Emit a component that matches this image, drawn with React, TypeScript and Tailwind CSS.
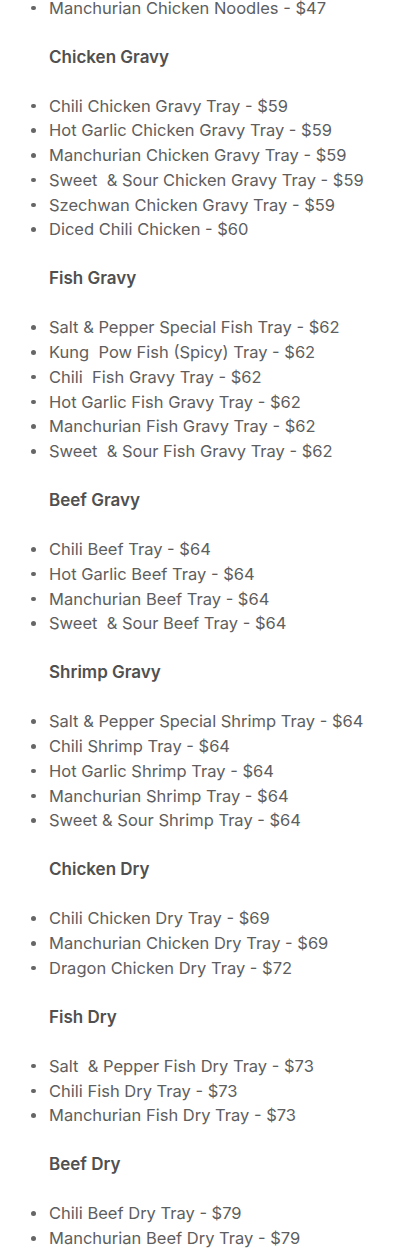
import React from "react";

const sections: { title: string; items: string[] }[] = [
  {
    title: "Chicken Gravy",
    items: [
      "Chili Chicken Gravy Tray - $59",
      "Hot Garlic Chicken Gravy Tray - $59",
      "Manchurian Chicken Gravy Tray - $59",
      "Sweet  & Sour Chicken Gravy Tray - $59",
      "Szechwan Chicken Gravy Tray - $59",
      "Diced Chili Chicken - $60",
    ],
  },
  {
    title: "Fish Gravy",
    items: [
      "Salt & Pepper Special Fish Tray - $62",
      "Kung  Pow Fish (Spicy) Tray - $62",
      "Chili  Fish Gravy Tray - $62",
      "Hot Garlic Fish Gravy Tray - $62",
      "Manchurian Fish Gravy Tray - $62",
      "Sweet  & Sour Fish Gravy Tray - $62",
    ],
  },
  {
    title: "Beef Gravy",
    items: [
      "Chili Beef Tray - $64",
      "Hot Garlic Beef Tray - $64",
      "Manchurian Beef Tray - $64",
      "Sweet  & Sour Beef Tray - $64",
    ],
  },
  {
    title: "Shrimp Gravy",
    items: [
      "Salt & Pepper Special Shrimp Tray - $64",
      "Chili Shrimp Tray - $64",
      "Hot Garlic Shrimp Tray - $64",
      "Manchurian Shrimp Tray - $64",
      "Sweet & Sour Shrimp Tray - $64",
    ],
  },
  {
    title: "Chicken Dry",
    items: [
      "Chili Chicken Dry Tray - $69",
      "Manchurian Chicken Dry Tray - $69",
      "Dragon Chicken Dry Tray - $72",
    ],
  },
  {
    title: "Fish Dry",
    items: [
      "Salt  & Pepper Fish Dry Tray - $73",
      "Chili Fish Dry Tray - $73",
      "Manchurian Fish Dry Tray - $73",
    ],
  },
  {
    title: "Beef Dry",
    items: ["Chili Beef Dry Tray - $79", "Manchurian Beef Dry Tray - $79"],
  },
];

function Item({ text }: { text: string }) {
  return (
    <li className="flex items-center whitespace-pre">
      <span className="w-[49px] flex justify-end pr-[13.5px]">
        <span className="block w-[4.5px] h-[4.5px] rounded-full bg-[#666666]" />
      </span>
      <span>{text}</span>
    </li>
  );
}

export default function App() {
  return (
    <div
      className="bg-white w-[410px] h-[1251px] overflow-hidden text-[#5e5e5e] text-[16.5px] leading-[24.75px]"
      style={{ fontFamily: "Inter, 'Noto Sans', sans-serif" }}
    >
      <ul className="-mt-[4.5px]">
        <Item text="Manchurian Chicken Noodles - $47" />
      </ul>
      {sections.map((s) => (
        <div key={s.title}>
          <p className="mt-[24.25px] pl-[49px] text-[17px] font-semibold text-[#505050]">{s.title}</p>
          <ul className="mt-[24.25px]">
            {s.items.map((it) => (
              <Item key={it} text={it} />
            ))}
          </ul>
        </div>
      ))}
    </div>
  );
}
